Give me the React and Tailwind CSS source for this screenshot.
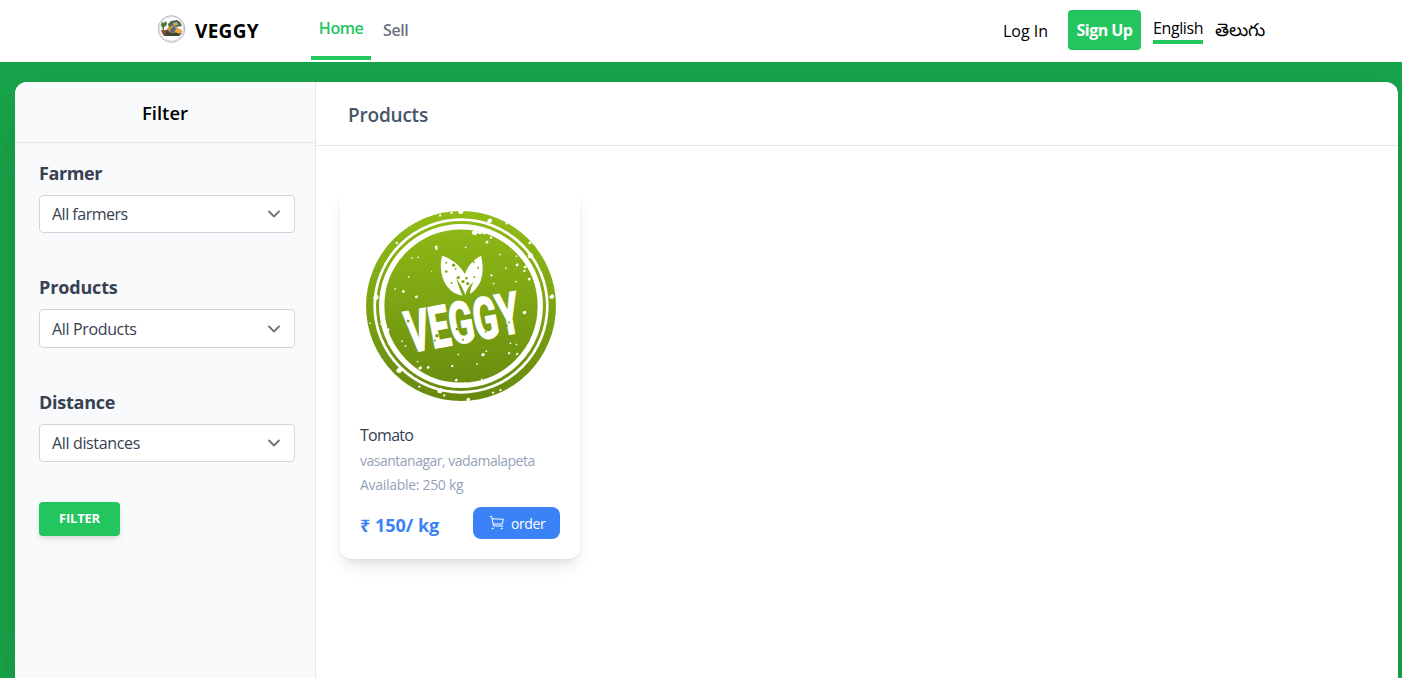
import React from "react";

const speckles = [
  [334, 36, 9], [272, 48, 4], [420, 64, 8], [470, 72, 4], [376, 98, 10], [392, 97, 8], [404, 100, 6], [346, 84, 7],
  [540, 130, 5], [542, 168, 9], [424, 114, 4], [412, 128, 5], [260, 142, 5], [261, 148, 4], [348, 144, 3],
  [206, 173, 3], [188, 175, 3], [178, 232, 3], [137, 268, 3], [162, 275, 5], [201, 291, 5], [246, 215, 2],
  [450, 165, 3], [502, 196, 5], [526, 202, 5], [524, 214, 4], [500, 170, 3], [538, 238, 5], [425, 227, 4],
  [432, 252, 3], [498, 246, 3], [468, 206, 3], [606, 290, 8], [588, 356, 4], [480, 344, 3], [524, 338, 6],
  [80, 293, 9], [116, 390, 5], [120, 430, 5], [64, 420, 3], [62, 370, 3], [96, 372, 4], [150, 510, 10],
  [212, 504, 6], [236, 502, 5], [204, 485, 3], [308, 498, 4], [326, 464, 3], [400, 464, 6], [410, 454, 3],
  [382, 492, 3], [478, 460, 4], [502, 462, 4], [500, 434, 3], [482, 430, 3], [320, 540, 5], [272, 572, 9],
  [284, 586, 4], [356, 598, 6], [346, 550, 4], [430, 578, 4], [452, 570, 4], [210, 560, 4], [158, 424, 3],
  [168, 438, 3], [436, 400, 3], [98, 480, 3], [142, 130, 4], [306, 40, 4], [556, 400, 4], [188, 400, 3], [396, 538, 3],
];

const leafHoles = [
  [290, 190, 3], [312, 197, 5], [318, 208, 3], [290, 216, 4], [352, 196, 4], [372, 188, 3], [385, 205, 3],
  [326, 234, 5], [340, 246, 5], [350, 236, 4], [354, 252, 5], [374, 232, 3], [306, 250, 3], [388, 264, 3],
];

function VeggyStamp() {
  return (
    <svg viewBox="50 35 568 568" className="h-[190px] w-[190px] overflow-visible" aria-label="Veggy stamp">
      <defs>
        <linearGradient id="leafGreen" x1="0" y1="0" x2="0" y2="1">
          <stop offset="0" stopColor="#92bd17" />
          <stop offset="1" stopColor="#66890e" />
        </linearGradient>
      </defs>
      <circle cx="334" cy="319" r="284" fill="url(#leafGreen)" />
      <circle cx="334" cy="319" r="258" fill="none" stroke="#fff" strokeWidth="8" />
      <circle cx="334" cy="319" r="237" fill="none" stroke="#fff" strokeWidth="16" />
      <g fill="#fff">
        {speckles.map(([x, y, r], i) => (
          <path key={i} d={`M${x - r} ${y}l${r * 0.7} ${-r * 0.6}l${r * 0.7} ${-r * 0.3}l${r * 0.5} ${r}l${-r * 0.6} ${r * 0.8}l${-r} ${-r * 0.1}z`} />
        ))}
        <path d="M278 169C310 180 330 198 346 224C354 198 372 180 394 169C403 205 399 246 382 262C377 270 370 277 361 283C362 267 366 259 371 247C357 259 352 270 347 286C341 270 334 256 320 236C325 256 331 269 338 288C303 282 283 256 276 222C272 203 273 184 278 169Z" />
      </g>
      <g fill="#80aa14">
        {leafHoles.map(([x, y, r], i) => (
          <circle key={i} cx={x} cy={y} r={r} />
        ))}
      </g>
      <text
        transform="translate(181 459) rotate(-10.6)"
        fontFamily="Roboto, 'Liberation Sans', sans-serif"
        fontWeight="700"
        fontSize="172"
        textLength="344"
        lengthAdjust="spacingAndGlyphs"
        fill="#fff"
        stroke="#fff"
        strokeWidth="5"
      >
        VEGGY
      </text>
      <g fill="#789b13">
        <circle cx="176" cy="364" r="4" /><circle cx="262" cy="408" r="5" /><circle cx="256" cy="422" r="3" />
        <circle cx="322" cy="388" r="4" /><circle cx="340" cy="420" r="3" /><circle cx="470" cy="378" r="4" />
        <circle cx="478" cy="368" r="3" /><circle cx="408" cy="396" r="3" /><circle cx="276" cy="352" r="3" />
      </g>
    </svg>
  );
}

function BrandEmblem() {
  return (
    <svg viewBox="0 0 30 30" className="-mt-1 h-[30px] w-[30px]" aria-hidden="true">
      <circle cx="14.5" cy="15" r="13.3" fill="#fff" stroke="#b4b4b4" strokeWidth="1" />
      <circle cx="14.5" cy="15" r="12" fill="none" stroke="#d2d2d2" strokeWidth="1.6" strokeDasharray="1 .8" />
      <path d="M11 10l3-3 6-1 3 2 2 4-6 1-7 1z" fill="#4c6751" />
      <path d="M4 11l1-3 2 1 2-2 1 3-1 2-2 1v3H6l-1-3z" fill="#527334" />
      <path d="M11 14l4-3 6 3 4 3-2 4H11l-4-3z" fill="#d98a35" />
      <path d="M5 17l5-1 4 3 7-1 4 1-3 3H7z" fill="#3f4934" />
      <path d="M14 15l3-3 2 3-2 3-4 1z" fill="#466f91" />
      <path d="M16 9l4-1 1 3-4 1z" fill="#d7a77b" />
      <path d="M4 16h5l-1 5H6z" fill="#8b552b" />
      <path d="M20 14l5 2-2 4-5-2z" fill="#eda74e" />
    </svg>
  );
}

function FilterField({ label, labelClass, value, valueClass, className, boxClass }) {
  return (
    <div className={className}>
      <div className={`h-7 text-[18px] leading-7 font-bold text-[#374151] ${labelClass}`}>{label}</div>
      <button className={`mt-2 flex w-64 items-center justify-between rounded border border-[#d1d5db] bg-white pr-[10px] pl-3 text-[#374151] ${boxClass}`}>
        <span className={`text-[16px] ${valueClass}`}>{value}</span>
        <svg viewBox="0 0 20 20" className="h-5 w-5" fill="none" stroke="#6b7280" strokeWidth="1.8" strokeLinecap="round" strokeLinejoin="round">
          <path d="M5 7.5l5 5 5-5" />
        </svg>
      </button>
    </div>
  );
}

export default function App() {
  return (
    <div className="flex h-[678px] w-full flex-col overflow-hidden bg-[#18a44a] font-['Open_Sans','Noto_Sans',sans-serif] text-black">
      <header className="flex h-[62px] shrink-0 bg-white pl-[157px]">
        <div className="flex w-[154px] items-center">
          <BrandEmblem />
          <span className="ml-2 text-[19px] font-bold tracking-[0.3px]">VEGGY</span>
        </div>
        <nav className="flex text-[16px] font-semibold">
          <a className="h-[60px] w-[60px] border-b-4 border-[#22c55e] pt-4 text-center leading-6 tracking-[-0.5px] text-[#22c55e]">Home</a>
          <a className="pt-[18px] pl-3 leading-6 tracking-[-0.4px] text-[#6b7280]">Sell</a>
        </nav>
        <div className="mr-[136px] ml-auto flex items-center">
          <a className="w-[46px] text-[16px] font-medium tracking-[0px] whitespace-nowrap">Log In</a>
          <button className="mr-3 ml-[19px] h-10 w-[73px] -translate-y-px rounded bg-[#22c55e] text-[16px] font-bold tracking-[-0.55px] whitespace-nowrap text-white">Sign Up</button>
          <a className="mr-3 h-8 w-[50px] -translate-y-[3px] border-b-4 border-[#22c55e] pt-0.5 text-[16px] leading-[28px] tracking-[-0.4px]">English</a>
          <a className="w-[51px] -translate-y-0.5 text-[18px] leading-6 whitespace-nowrap">తెలుగు</a>
        </div>
      </header>

      <main className="mt-5 mr-1 ml-[15px] flex min-h-0 flex-1 overflow-hidden rounded-t-xl bg-white shadow-2xl">
        <aside className="w-[301px] shrink-0 border-r border-[#e5e7eb] bg-[#f9fafb]">
          <h2 className="h-[61px] border-b border-[#e5e7eb] pt-[17px] text-center text-[18.5px] leading-7 font-semibold">Filter</h2>
          <div className="px-6">
            <FilterField label="Farmer" labelClass="tracking-[-0.4px]" value="All farmers" valueClass="tracking-[-0.5px]" className="mt-[16px]" boxClass="h-[38px]" />
            <FilterField label="Products" labelClass="tracking-[-0.15px]" value="All Products" valueClass="tracking-[-0.35px]" className="mt-10" boxClass="h-[39px]" />
            <FilterField label="Distance" labelClass="tracking-[-0.25px]" value="All distances" valueClass="tracking-[-0.35px]" className="mt-10" boxClass="h-[38px]" />
            <button className="mt-10 h-[34px] w-[81px] rounded bg-[#22c55e] text-[13px] font-bold tracking-[-0.2px] text-white shadow-md">FILTER</button>
          </div>
        </aside>

        <section className="flex-1">
          <h1 className="h-16 border-b border-[#e5e7eb] pt-[19px] pl-8 text-[19px] leading-7 font-semibold tracking-[-0.2px] text-[#475569]">Products</h1>
          <article className="mt-10 ml-6 h-[373px] w-60 rounded-xl bg-white px-5 pt-[25px] shadow-lg">
            <div className="pl-[6px]"><VeggyStamp /></div>
            <h3 className="mt-[22px] text-[16px] leading-6 tracking-[-0.7px] text-[#334155]">Tomato</h3>
            <p className="mt-1 text-[14px] leading-5 tracking-[-0.5px] whitespace-nowrap text-[#94a3b8]">vasantanagar, vadamalapeta</p>
            <p className="mt-1 text-[14px] leading-5 tracking-[-0.3px] text-[#94a3b8]">Available: 250 kg</p>
            <div className="mt-3 flex items-center justify-between">
              <p className="translate-y-0.5 text-[18px] leading-7 font-bold whitespace-nowrap text-[#3b82f6]">₹ 150/ kg</p>
              <button className="flex h-8 w-[87px] items-center rounded-lg bg-[#3b82f6] pl-4 text-[14px] tracking-[-0.4px] text-white">
                <svg viewBox="0 0 16 16" className="mr-[6px] h-4 w-4" fill="none" stroke="#fff" strokeWidth="1" strokeLinecap="round" strokeLinejoin="round">
                  <path d="M1.2 1.5h1.5L4.5 11h9.3M3.2 3.8l11.2 .4-1.2 4.8H4.2" />
                  <circle cx="3.5" cy="13.5" r=".5" /><circle cx="12.5" cy="13.5" r=".5" />
                </svg>
                order
              </button>
            </div>
          </article>
        </section>
      </main>
    </div>
  );
}
